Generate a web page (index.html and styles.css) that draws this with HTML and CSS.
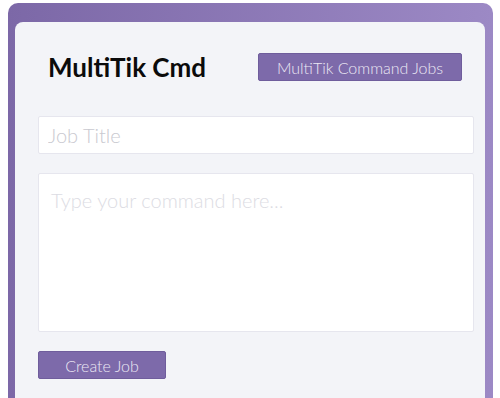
FILE: index.html
```html
<!DOCTYPE html>
<html>
<head>
<meta charset="utf-8">
<link rel="stylesheet" href="styles.css">
</head>
<body>
<div class="frame">
  <div class="card">
    <div class="header">
      <h1 class="title">MultiTik Cmd</h1>
      <button class="btn btn-jobs">MultiTik Command Jobs</button>
    </div>
    <form class="form">
      <input class="field" type="text" placeholder="Job Title">
      <textarea class="field area" placeholder="Type your command here..."></textarea>
      <div class="actions"><button type="button" class="btn btn-create">Create Job</button></div>
    </form>
  </div>
</div>
</body>
</html>
```
FILE: styles.css
```css
html, body {
  margin: 0;
  padding: 0;
  background: #ffffff;
  overflow: hidden;
}
body {
  padding: 3px 7px 0 8px;
  font-family: "Lato", "Liberation Sans", sans-serif;
}
.frame {
  width: 485px;
  height: 395px;
  box-sizing: border-box;
  padding: 19px 8px 0 7px;
  border-radius: 10px 10px 0 0;
  background: linear-gradient(to right, #7c68a7, #9c89c5);
}
.card {
  height: 100%;
  background: #f3f4f8;
  border-radius: 8px 8px 0 0;
  padding: 31px 11px 0 23px;
  box-sizing: border-box;
}
.header {
  display: flex;
  align-items: center;
  justify-content: space-between;
  height: 28px;
  padding: 0 12px 0 10px;
}
.title {
  margin: 0;
  font-size: 26px;
  line-height: 28px;
  font-weight: 700;
  color: #0b0b0b;
}
.btn {
  font-family: "Lato", "Liberation Sans", sans-serif;
  font-weight: 300;
  font-size: 16px;
  color: #ece8f4;
  background: #7d6aaa;
  border: 1px solid #6f5d9c;
  border-radius: 2px;
  height: 28px;
  padding: 0;
  cursor: pointer;
}
.btn-jobs {
  width: 204px;
}
.form {
  display: flex;
  flex-direction: column;
  gap: 19px;
  margin-top: 35px;
}
.field {
  box-sizing: border-box;
  width: 436px;
  height: 38px;
  background: #ffffff;
  border: 1px solid #e6e6ee;
  border-radius: 2px;
  font-family: "Lato", "Liberation Sans", sans-serif;
  font-weight: 300;
  font-size: 20px;
  padding: 0 9px;
  outline: none;
}
.field::placeholder {
  color: #c9c9d0;
}
.area {
  height: 159px;
  resize: none;
  font-size: 20px;
  line-height: 24px;
  padding: 14px 12px;
}
.area::placeholder {
  color: #dcdce3;
}
.actions {
  display: flex;
}
.btn-create {
  width: 128px;
}
```
